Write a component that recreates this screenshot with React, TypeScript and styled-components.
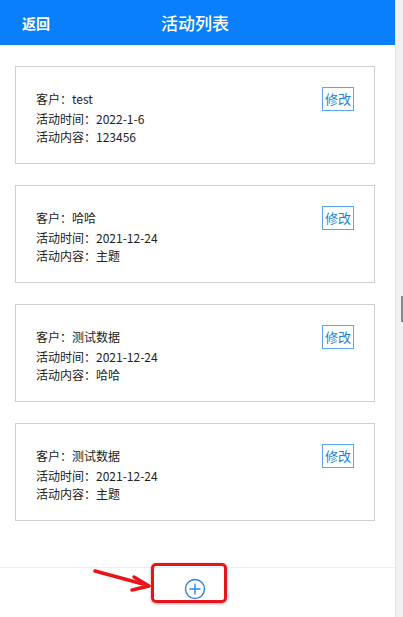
import React from "react";
import styled, { createGlobalStyle } from "styled-components";

const GlobalStyle = createGlobalStyle`
    html, body {
        margin: 0;
        padding: 0;
        height: 617px;
        overflow: hidden;
        background: #fff;
        font-family: "Noto Sans CJK SC", "Noto Sans", sans-serif;
    }
`;

const Page = styled.div`
    position: relative;
    display: flex;
    width: 403px;
    height: 617px;
`;

const Main = styled.div`
    width: 395px;
    display: flex;
    flex-direction: column;
`;

const Header = styled.div`
    height: 45px;
    background: #0a7ffb;
    color: #fff;
    display: grid;
    grid-template-columns: 80px 1fr 85px;
    align-items: center;
    .back {
        padding-left: 22px;
        font-size: 14px;
        font-weight: 600;
    }
    .title {
        text-align: center;
        font-size: 17px;
        font-weight: 500;
    }
`;

const List = styled.div`
    flex: 1;
    display: flex;
    flex-direction: column;
    gap: 21px;
    padding: 21px 20px 0 15px;
`;

const Card = styled.div`
    height: 98px;
    box-sizing: border-box;
    border: 1px solid #cfcfcf;
    padding: 20px 20px 0 20px;
    font-size: 12px;
    color: #222;
    .row {
        display: flex;
        justify-content: space-between;
        align-items: center;
        height: 23px;
    }
    .line {
        line-height: 18px;
    }
`;

const EditButton = styled.button`
    height: 24px;
    box-sizing: border-box;
    border: 1px solid #5aa6ee;
    background: #fff;
    color: #1a7fe0;
    font-family: inherit;
    font-size: 13px;
    padding: 0 2px;
    line-height: 20px;
`;

const BottomBar = styled.div`
    height: 50px;
    border-top: 1px solid #eeeeee;
    display: flex;
    justify-content: center;
    padding: 10px 5px 0 0;
    box-sizing: border-box;
`;

const ScrollTrack = styled.div`
    width: 8px;
    background: #f1f1f1;
    border-left: 1px solid #e4e4e4;
    box-sizing: border-box;
    padding-top: 296px;
    .thumb {
        margin-left: 5px;
        width: 2px;
        height: 26px;
        background: #8a8a8a;
    }
`;

const Highlight = styled.div`
    position: absolute;
    left: 151px;
    top: 563px;
    width: 76px;
    height: 40px;
    box-sizing: border-box;
    border: 3px solid #e8141c;
    border-radius: 5px;
    box-shadow: 0 1px 3px rgba(0, 0, 0, 0.35);
`;

const Arrow = styled.svg`
    position: absolute;
    left: 90px;
    top: 564px;
`;

const items = [
    { customer: "test", time: "2022-1-6", content: "123456" },
    { customer: "哈哈", time: "2021-12-24", content: "主题" },
    { customer: "测试数据", time: "2021-12-24", content: "哈哈" },
    { customer: "测试数据", time: "2021-12-24", content: "主题" },
];

export default function App() {
    return (
        <Page>
            <GlobalStyle />
            <Main>
                <Header>
                    <div className="back">返回</div>
                    <div className="title">活动列表</div>
                    <div />
                </Header>
                <List>
                    {items.map((it, i) => (
                        <Card key={i}>
                            <div className="row">
                                <span>客户：{it.customer}</span>
                                <EditButton>修改</EditButton>
                            </div>
                            <div className="line">活动时间：{it.time}</div>
                            <div className="line">活动内容：{it.content}</div>
                        </Card>
                    ))}
                </List>
                <BottomBar>
                    <svg width="22" height="22" viewBox="0 0 22 22">
                        <circle cx="11" cy="11" r="9.5" fill="none" stroke="#2a86e4" strokeWidth="1.4" />
                        <path d="M11 5.5v11M5.5 11h11" stroke="#2a86e4" strokeWidth="1.4" />
                    </svg>
                </BottomBar>
            </Main>
            <ScrollTrack>
                <div className="thumb" />
            </ScrollTrack>
            <Arrow width="64" height="30" viewBox="0 0 64 30">
                <path d="M5 7 L53 20" stroke="#e8141c" strokeWidth="3.5" strokeLinecap="round" />
                <path d="M44 13 L59 22 L42 26" fill="none" stroke="#e8141c" strokeWidth="3.5" strokeLinecap="round" strokeLinejoin="round" />
            </Arrow>
            <Highlight />
        </Page>
    );
}
